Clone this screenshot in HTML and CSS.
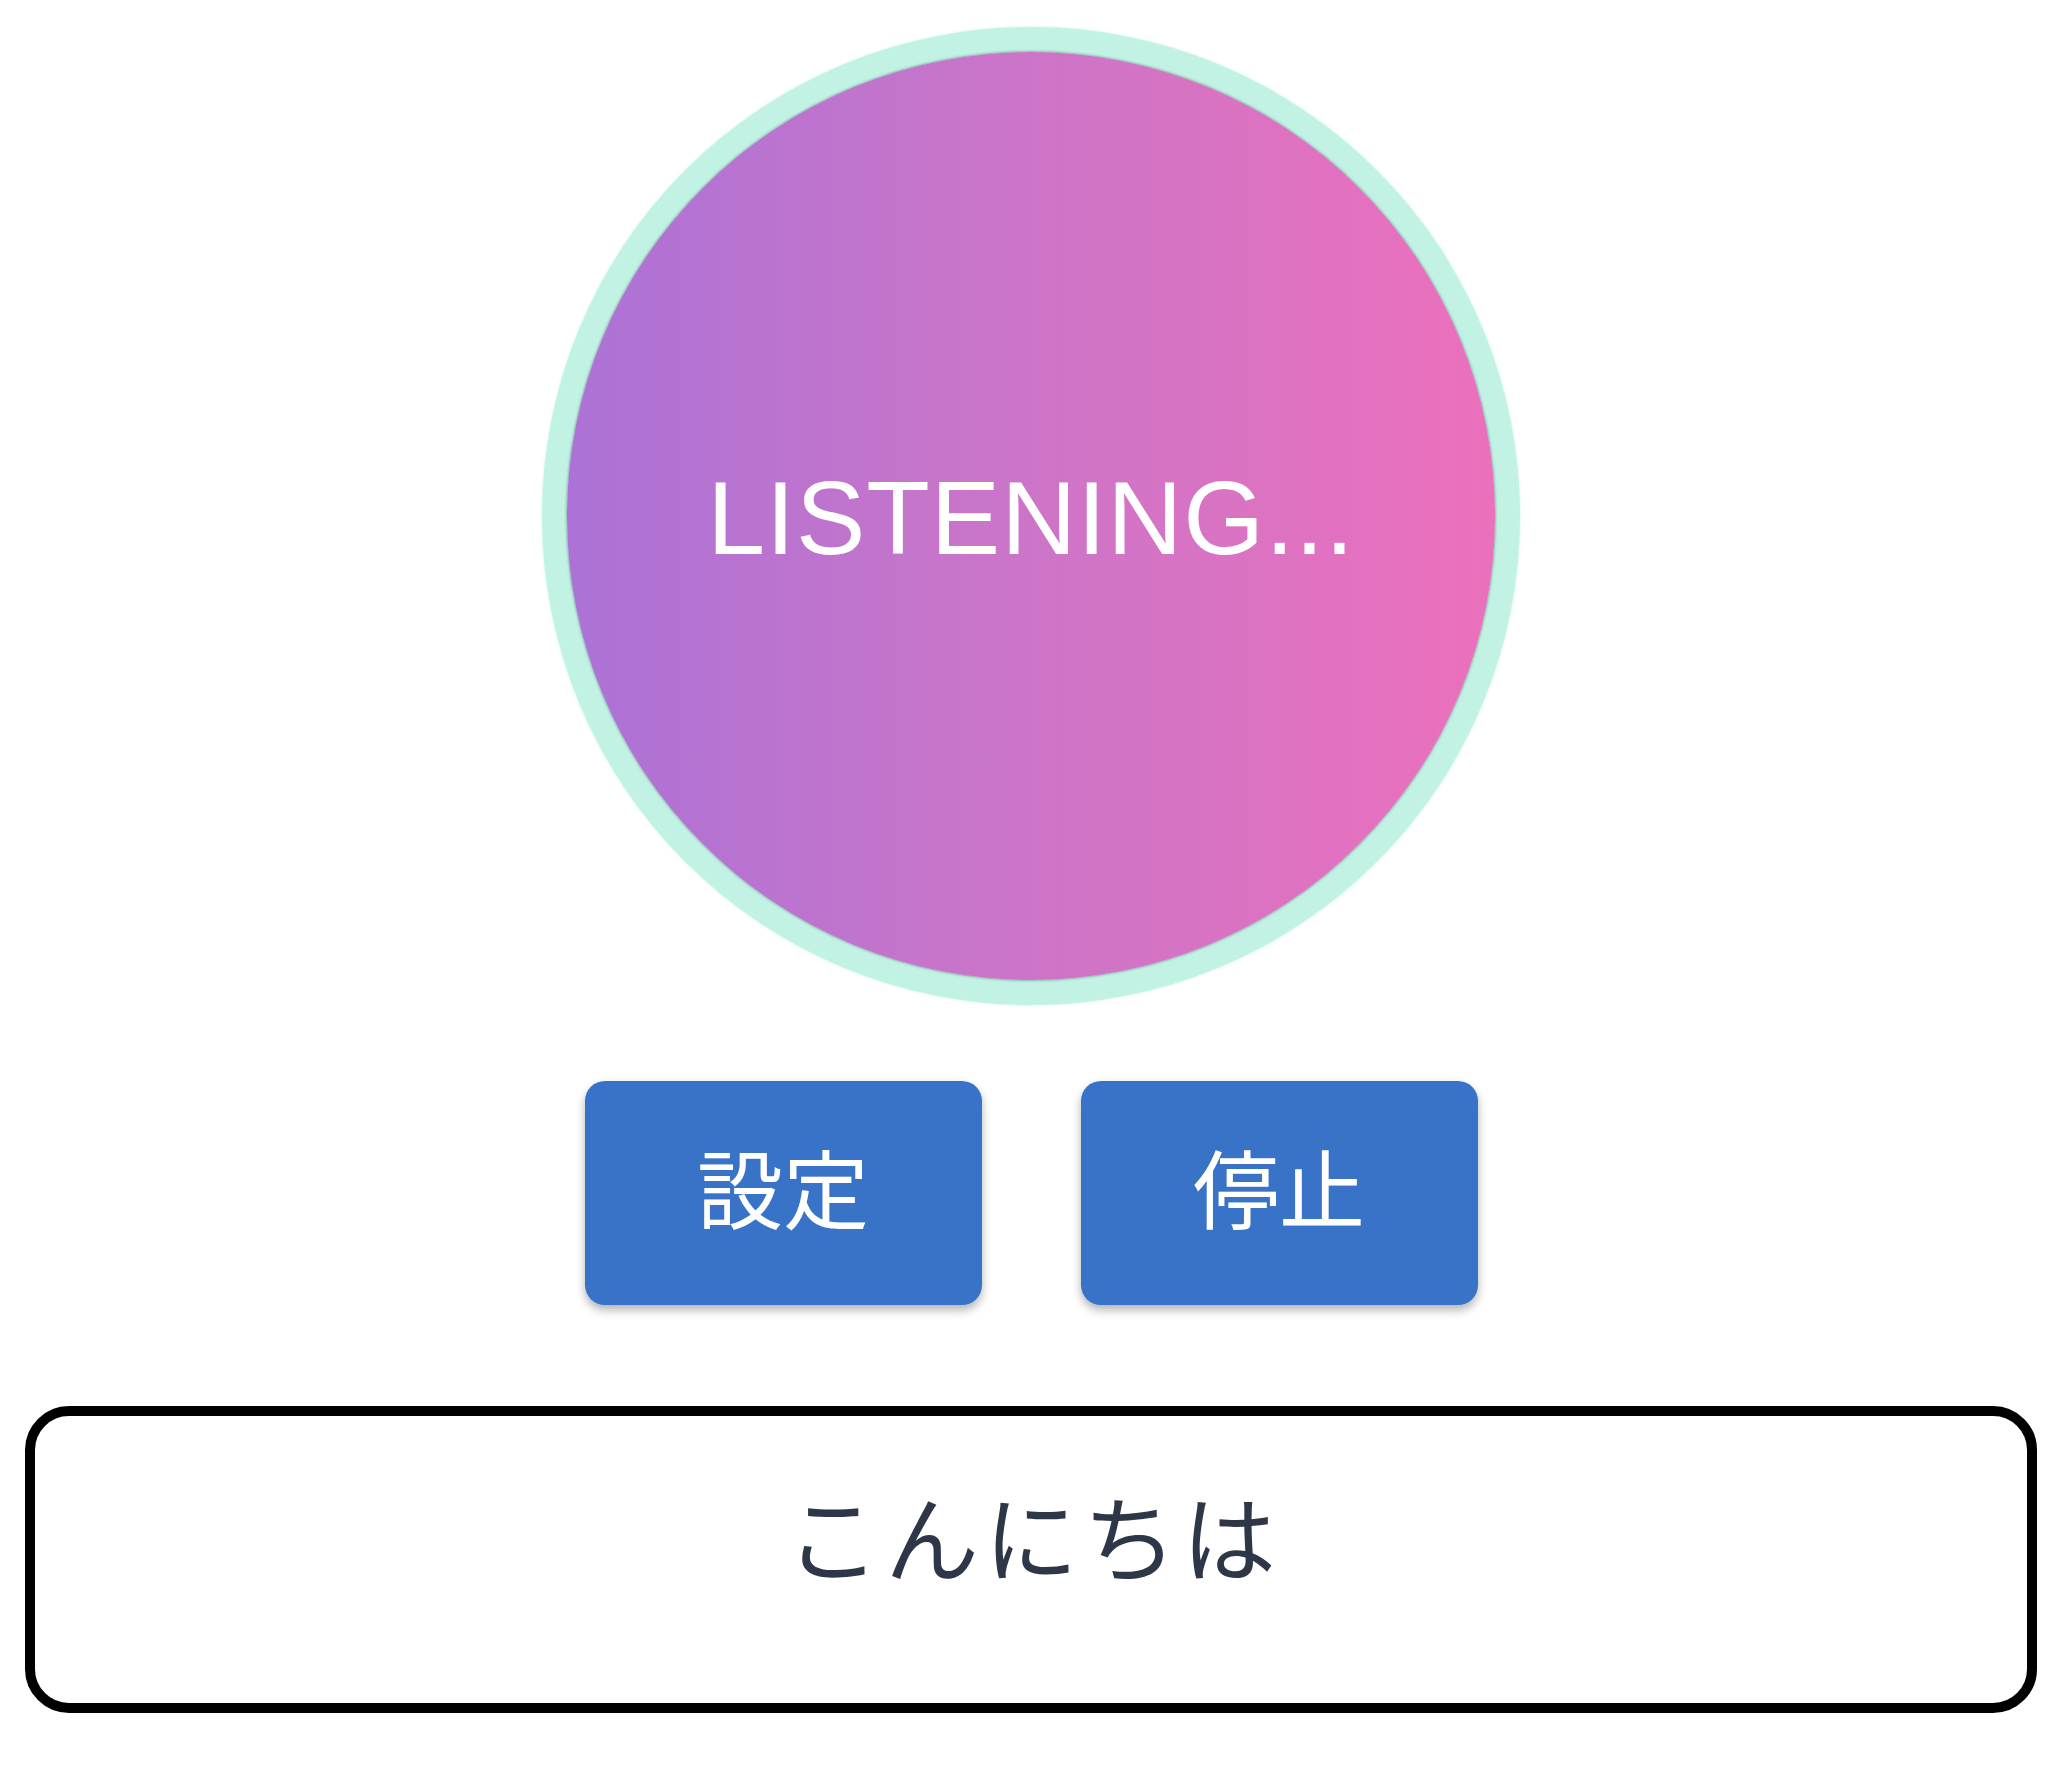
FILE: index.html
```html
<!DOCTYPE html>
<html lang="ja">
<head>
<meta charset="utf-8">
<title>Listening</title>
<link rel="stylesheet" href="styles.css">
</head>
<body>
<main class="app">
  <div class="orb-ring">
    <div class="orb">
      <span class="orb-label">LISTENING...</span>
    </div>
  </div>
  <div class="actions">
    <button class="btn">設定</button>
    <button class="btn">停止</button>
  </div>
  <div class="transcript">
    <p class="transcript-text">こんにちは</p>
  </div>
</main>
</body>
</html>
```

FILE: styles.css
```css
html, body {
  margin: 0;
  padding: 0;
  background: #ffffff;
}

.app {
  display: flex;
  flex-direction: column;
  align-items: center;
  padding: 27px 25px 0 25px;
  font-family: "Liberation Sans", "Noto Sans CJK JP", sans-serif;
}

.orb-ring {
  width: 978px;
  height: 978px;
  box-sizing: border-box;
  border-radius: 50%;
  background: #c1f2e4;
  padding: 25px;
  box-shadow: 0 0 3px rgba(193, 242, 228, 0.8);
}

.orb {
  width: 100%;
  height: 100%;
  border-radius: 50%;
  background: linear-gradient(to right, #ac72d6 0%, #c975c9 45%, #ec70bc 100%);
  box-shadow: 0 0 3px rgba(40, 40, 60, 0.6);
  display: flex;
  align-items: center;
  justify-content: center;
}

.orb-label {
  color: #ffffff;
  font-family: "Liberation Sans", Arial, sans-serif;
  font-size: 104px;
  letter-spacing: 1px;
  line-height: 1;
  padding-top: 4px;
}

.actions {
  display: flex;
  gap: 99px;
  margin-top: 76px;
}

.btn {
  width: 397px;
  height: 224px;
  border: none;
  border-radius: 20px;
  background: #3873c8;
  color: #ffffff;
  font-family: "Noto Sans CJK JP", sans-serif;
  font-size: 86px;
  line-height: 1;
  padding: 0 0 14px 0;
  box-shadow: 0 5px 10px rgba(0, 0, 0, 0.3);
  cursor: pointer;
}

.transcript {
  align-self: stretch;
  margin-top: 101px;
  height: 307px;
  box-sizing: border-box;
  border: 10px solid #000000;
  border-radius: 44px;
  padding-top: 71px;
  text-align: center;
}

.transcript-text {
  margin: 0;
  font-family: "Noto Sans CJK JP", sans-serif;
  font-size: 94px;
  letter-spacing: 5px;
  text-indent: 5px;
  line-height: 1;
  color: #2d3748;
}
```
